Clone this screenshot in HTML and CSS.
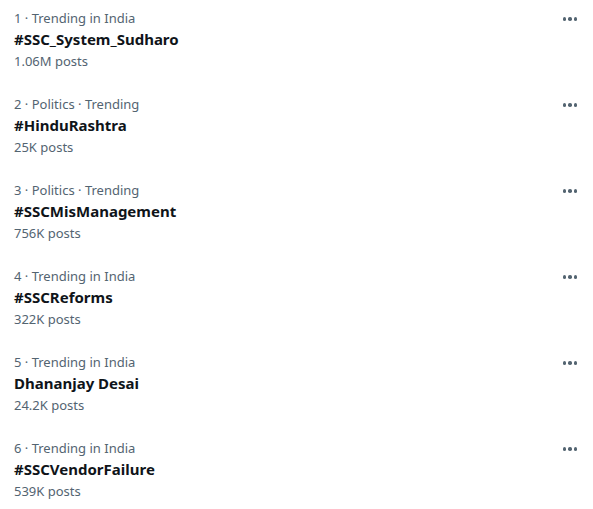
FILE: index.html
```html
<!DOCTYPE html>
<html>
<head>
<meta charset="utf-8">
<link rel="stylesheet" href="styles.css">
</head>
<body>
<div class="list">
  <div class="row">
    <div class="text">
      <div class="meta">1 · Trending in India</div>
      <div class="title">#SSC_System_Sudharo</div>
      <div class="meta posts">1.06M posts</div>
    </div>
    <div class="more"><span></span><span></span><span></span></div>
  </div>
  <div class="row">
    <div class="text">
      <div class="meta">2 · Politics · Trending</div>
      <div class="title">#HinduRashtra</div>
      <div class="meta posts">25K posts</div>
    </div>
    <div class="more"><span></span><span></span><span></span></div>
  </div>
  <div class="row">
    <div class="text">
      <div class="meta">3 · Politics · Trending</div>
      <div class="title">#SSCMisManagement</div>
      <div class="meta posts">756K posts</div>
    </div>
    <div class="more"><span></span><span></span><span></span></div>
  </div>
  <div class="row">
    <div class="text">
      <div class="meta">4 · Trending in India</div>
      <div class="title">#SSCReforms</div>
      <div class="meta posts">322K posts</div>
    </div>
    <div class="more"><span></span><span></span><span></span></div>
  </div>
  <div class="row">
    <div class="text">
      <div class="meta">5 · Trending in India</div>
      <div class="title">Dhananjay Desai</div>
      <div class="meta posts">24.2K posts</div>
    </div>
    <div class="more"><span></span><span></span><span></span></div>
  </div>
  <div class="row">
    <div class="text">
      <div class="meta">6 · Trending in India</div>
      <div class="title">#SSCVendorFailure</div>
      <div class="meta posts">539K posts</div>
    </div>
    <div class="more"><span></span><span></span><span></span></div>
  </div>
</div>
</body>
</html>
```
FILE: styles.css
```css
html, body {
  margin: 0;
  padding: 0;
  background: #ffffff;
}
body {
  font-family: "Noto Sans", "Open Sans", sans-serif;
  color: #0f1419;
}
.list {
  display: flex;
  flex-direction: column;
}
.row {
  display: flex;
  justify-content: space-between;
  align-items: flex-start;
  height: 86px;
  box-sizing: border-box;
  padding: 8px 16px 0 14px;
}
.meta {
  font-size: 13px;
  line-height: 20px;
  color: #536471;
}
.posts {
  line-height: 22px;
}
.title {
  font-size: 15px;
  font-weight: 700;
  line-height: 22px;
  color: #0f1419;
}
.more {
  display: flex;
  gap: 2px;
  margin-top: 9px;
  margin-right: 0;
}
.more span {
  width: 3.5px;
  height: 3.5px;
  border-radius: 50%;
  background: #536471;
}
```
